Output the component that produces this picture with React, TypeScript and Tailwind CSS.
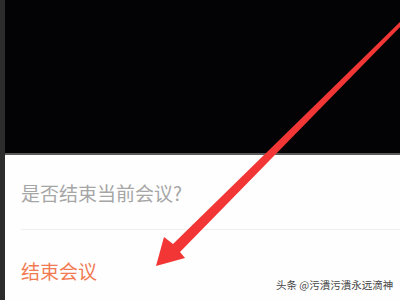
import React from "react";

export default function App() {
  return (
    <div className="relative w-[400px] h-[300px] overflow-hidden bg-[#2c2c2c] flex" style={{ fontFamily: '"Noto Sans CJK SC", "Noto Sans", sans-serif' }}>
      <div className="w-[5px] shrink-0 bg-[#2c2c2c]" />
      <div className="flex-1 flex flex-col overflow-hidden">
        <div className="h-[153px] shrink-0 bg-[#030305]" />
        <div className="h-[2px] shrink-0 bg-[#5a5a5a]" />
        <div className="flex-1 min-h-0 bg-[#fefefe] flex flex-col overflow-hidden">
          <div className="h-[74px] shrink-0 pl-4 flex items-center">
            <span className="text-[19px] leading-none text-[#a6a6a6]">是否结束当前会议?</span>
          </div>
          <div className="ml-4 shrink-0 border-t border-[#efefef] flex flex-col">
            <div className="h-[80px] shrink-0 flex items-center">
              <span className="text-[19px] leading-none text-[#f27a52]">结束会议</span>
            </div>
          </div>
        </div>
      </div>
      <div className="absolute left-[276px] top-[278px] text-[10.5px] leading-[14px] text-[#474747] whitespace-nowrap">
        头条 @污潰污潰永远滴神
      </div>
      <svg className="absolute left-0 top-0" width="400" height="300" viewBox="0 0 400 300">
        <defs>
          <filter id="b" x="-10%" y="-10%" width="120%" height="120%">
            <feGaussianBlur stdDeviation="0.6" />
          </filter>
        </defs>
        <polygon
          filter="url(#b)"
          fill="#f23535"
          points="404,23 402,20 173,244 164,237 156,266 185,258 180,252"
        />
      </svg>
    </div>
  );
}
